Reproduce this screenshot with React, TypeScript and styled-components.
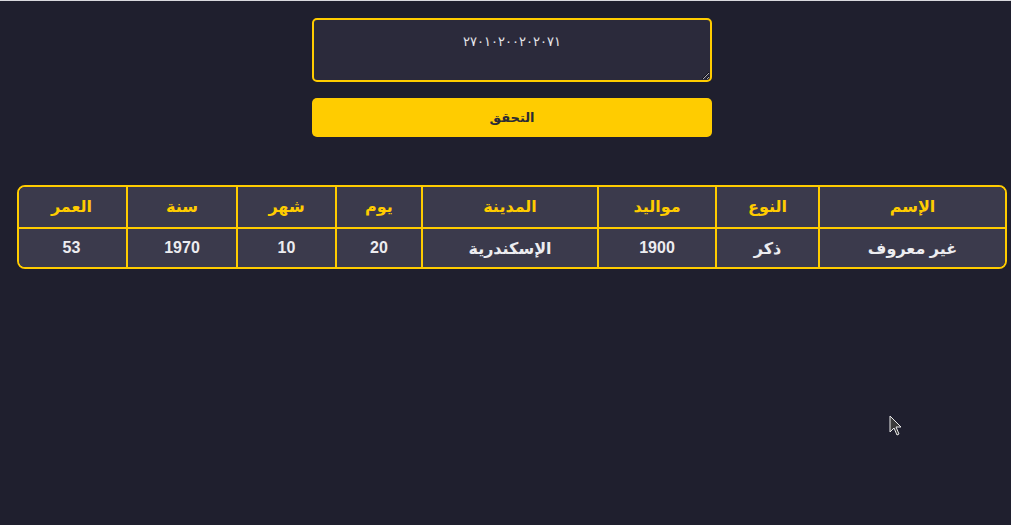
import React from 'react'
import styled, { createGlobalStyle } from 'styled-components'

const GlobalStyle = createGlobalStyle`
  html, body {
    margin: 0;
    padding: 0;
    background: #1f1f2e;
    height: 100%;
  }
  body {
    border-top: 1px solid #d9d9de;
    font-family: "Liberation Sans", "DejaVu Sans", sans-serif;
  }
`

const Page = styled.div`
  position: relative;
  width: 990px;
  margin-left: 17px;
  padding-top: 17px;
  height: 507px;
  direction: rtl;
`

const Form = styled.div`
  width: 400px;
  margin: 0 auto;
  display: flex;
  flex-direction: column;
  gap: 16px;
`

const IdInput = styled.textarea`
  box-sizing: border-box;
  width: 400px;
  height: 64px;
  padding: 14px 12px 12px;
  background: #2b2a3b;
  border: 2px solid #ffcc00;
  border-radius: 5px;
  color: #e6e6ea;
  font-family: "DejaVu Sans", sans-serif;
  font-size: 13px;
  text-align: center;
  outline: none;
  resize: vertical;
  direction: ltr;
`

const CheckButton = styled.button`
  height: 39px;
  background: #ffcc00;
  border: none;
  border-radius: 5px;
  color: #2a2a35;
  font-family: "DejaVu Sans", sans-serif;
  font-weight: bold;
  font-size: 13px;
  cursor: pointer;
`

const TableFrame = styled.div`
  margin-top: 48px;
  border: 2px solid #ffcc00;
  border-radius: 8px;
  overflow: hidden;
`

const Table = styled.table`
  width: 100%;
  border-collapse: collapse;
  table-layout: fixed;
  background: #3b3a4c;
`

const Cell = styled.td<{ $head?: boolean }>`
  height: 38px;
  padding: 0;
  text-align: center;
  font-weight: bold;
  font-size: 16px;
  color: ${({ $head }) => ($head ? '#ffcc00' : '#ececf0')};
  border: 2px solid #ffcc00;
  padding-bottom: ${({ $head }) => ($head ? '2px' : '0')};
  &:first-child {
    border-right: none;
  }
  &:last-child {
    border-left: none;
  }
`

const HeadRow = styled.tr`
  td {
    border-top: none;
  }
`

const BodyRow = styled.tr`
  td {
    border-bottom: none;
  }
`

const Pointer = styled.svg`
  position: absolute;
  left: 872px;
  top: 414px;
`

const columns = [
  { title: 'الإسم', value: 'غير معروف', width: 186 },
  { title: 'النوع', value: 'ذكر', width: 103 },
  { title: 'مواليد', value: '1900', width: 118 },
  { title: 'المدينة', value: 'الإسكندرية', width: 176 },
  { title: 'يوم', value: '20', width: 86 },
  { title: 'شهر', value: '10', width: 99 },
  { title: 'سنة', value: '1970', width: 110 },
  { title: 'العمر', value: '53', width: 110 },
]

export default function App() {
  return (
    <>
      <GlobalStyle />
      <Page>
        <Form>
          <IdInput defaultValue="٢٧٠١٠٢٠٠٢٠٢٠٧١" />
          <CheckButton>التحقق</CheckButton>
        </Form>
        <TableFrame>
          <Table>
            <colgroup>
              {columns.map((c) => (
                <col key={c.title} style={{ width: c.width }} />
              ))}
            </colgroup>
            <tbody>
              <HeadRow>
                {columns.map((c) => (
                  <Cell key={c.title} $head>
                    {c.title}
                  </Cell>
                ))}
              </HeadRow>
              <BodyRow>
                {columns.map((c) => (
                  <Cell key={c.title}>{c.value}</Cell>
                ))}
              </BodyRow>
            </tbody>
          </Table>
        </TableFrame>
        <Pointer width="14" height="22" viewBox="0 0 14 22">
          <path d="M1 1 L1 17 L5 13 L8 20 L10 19 L7 12 L12 12 Z" fill="#3a3a3a" stroke="#e8e8e8" strokeWidth="1" />
        </Pointer>
      </Page>
    </>
  )
}
